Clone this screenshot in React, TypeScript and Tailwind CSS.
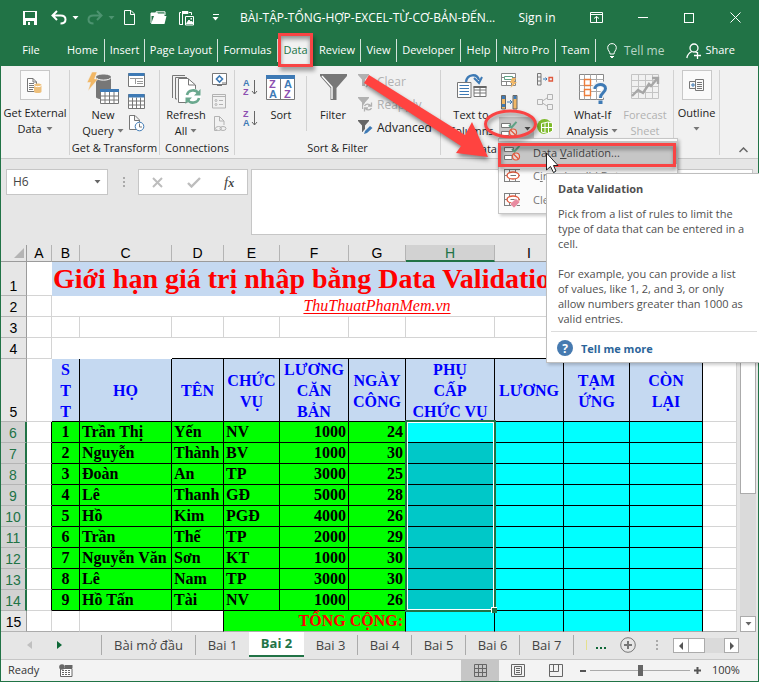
import type { ReactNode } from 'react'

const TABS = [
  { label: 'Home',        cls: 'w-[44px] border-r' },
  { label: 'Insert',      cls: 'w-[40px] border-r' },
  { label: 'Page Layout', cls: 'w-[73px] border-r' },
  { label: 'Formulas',    cls: 'w-[60px] border-r' },
  { label: 'Data',        cls: 'w-[36px]' },
  { label: 'Review',      cls: 'w-[47px] border-r' },
  { label: 'View',        cls: 'w-[36px] border-r' },
  { label: 'Developer',   cls: 'w-[64px] border-r' },
  { label: 'Help',        cls: 'w-[36px] border-r' },
  { label: 'Nitro Pro',   cls: 'w-[59px] border-r' },
  { label: 'Team',        cls: 'w-[40px] border-r' },
]

const COLUMNS = [
  { name: 'A', w: 'w-[25px]' },
  { name: 'B', w: 'w-[28px]' },
  { name: 'C', w: 'w-[92px]' },
  { name: 'D', w: 'w-[52px]' },
  { name: 'E', w: 'w-[56px]' },
  { name: 'F', w: 'w-[69px]' },
  { name: 'G', w: 'w-[57px]' },
  { name: 'H', w: 'w-[89px]' },
  { name: 'I', w: 'w-[69px]' },
  { name: 'J', w: 'w-[66px]' },
  { name: 'K', w: 'w-[73px]' },
  { name: 'L', w: '' },
]

const HEADINGS = [
  ['S', 'T', 'T'],
  ['HỌ'],
  ['TÊN'],
  ['CHỨC', 'VỤ'],
  ['LƯƠNG', 'CĂN', 'BẢN'],
  ['NGÀY', 'CÔNG'],
  ['PHỤ', 'CẤP', 'CHỨC VỤ'],
  ['LƯƠNG'],
  ['TẠM', 'ỨNG'],
  ['CÒN', 'LẠI'],
]

const STAFF = [
  ['Trần Thị',   'Yến',   'NV',  1000, 24],
  ['Nguyễn',     'Thành', 'BV',  1000, 30],
  ['Đoàn',       'An',    'TP',  3000, 25],
  ['Lê',         'Thanh', 'GĐ',  5000, 28],
  ['Hồ',         'Kim',   'PGĐ', 4000, 26],
  ['Trần',       'Thế',   'TP',  2000, 29],
  ['Nguyễn Văn', 'Sơn',   'KT',  1000, 30],
  ['Lê',         'Nam',   'TP',  3000, 30],
  ['Hồ Tấn',     'Tài',   'NV',  1000, 26],
]

const SHEETS = ['Bài mở đầu', 'Bai 1', 'Bai 2', 'Bai 3', 'Bai 4', 'Bai 5', 'Bai 6', 'Bai 7']

function Caret({ className = '' }: { className?: string }) {
  return (
    <svg width="7" height="4" viewBox="0 0 7 4" className={`inline-block shrink-0 ${className}`}>
      <path d="M0.5 0H6.5L3.5 3.5Z" fill="currentColor" />
    </svg>
  )
}

function TitleBar() {
  return (
    <div className="flex h-[35px] items-center text-white">
      <div className="flex w-[239px] shrink-0 items-center pl-[22px]">
        <button aria-label="Save">
          <svg width="15" height="15" viewBox="0 0 15 15">
            <path d="M0 1H14V15H0Z" fill="#fff" />
            <path d="M2 2H12V8H2Z" fill="#217346" />
            <path d="M3 11H11V15H3Z" fill="#217346" />
            <path d="M5 12H7V15H5Z" fill="#fff" />
          </svg>
        </button>
        <button aria-label="Undo" className="ml-[13px] flex items-center gap-[5px]">
          <svg width="16" height="15" viewBox="0 0 16 15" fill="none" stroke="#fff" strokeWidth="2">
            <path d="M6 1L1.5 5.5L6 10M2 5.5H9.5C13 5.5 14.5 7.5 14.5 9.5C14.5 12 12.5 13.5 9.5 13.5" />
          </svg>
          <Caret />
        </button>
        <button aria-label="Redo" className="ml-[8px] flex items-center gap-[5px] text-[#4d9370]">
          <svg width="16" height="15" viewBox="0 0 16 15" fill="none" stroke="currentColor" strokeWidth="2">
            <path d="M10 1L14.5 5.5L10 10M14 5.5H6.5C3 5.5 1.5 7.5 1.5 9.5C1.5 12 3.5 13.5 6.5 13.5" />
          </svg>
          <Caret />
        </button>
        <button aria-label="New" className="ml-[9px]">
          <svg width="13" height="15" viewBox="0 0 13 15" fill="none" stroke="#fff">
            <path d="M0.500 0.500H7L10.500 4V14.500H0.500ZM6.500 0.500V4.500H10.500" />
          </svg>
        </button>
        <button aria-label="Open" className="ml-[13px]">
          <svg width="17" height="14" viewBox="0 0 17 14">
            <path d="M1 12V2H6V0.800H15V4" fill="none" stroke="#fff" />
            <path d="M1 13L4 5H16.500L14.500 13Z" fill="#fff" />
            <path d="M7 1L8 2.500H14.500V5H1V2H6Z" fill="#fff" />
          </svg>
        </button>
        <button aria-label="Paste picture" className="ml-[11px]">
          <svg width="17" height="16" viewBox="0 0 17 16" fill="none" stroke="#fff">
            <path d="M5 14.500H1.500V2.500H3M11 2.500H13.500V5M4.500 1V14" />
            <path d="M5 1.500H10V3.500H5Z" fill="#fff" />
            <path d="M7.500 6.500H15.500V15H7.500Z" />
            <path d="M8.500 13.500L11 10L12.500 12L13.500 11L15 13.500Z" fill="#fff" />
            <path d="M12.500 8H14V9.500H12.500Z" fill="#fff" stroke="none" />
          </svg>
        </button>
        <button aria-label="Customize toolbar" className="ml-[17px] flex flex-col items-center gap-[2px]">
          <span className="h-px w-[6px] bg-white" />
          <Caret />
        </button>
      </div>
      <div className="min-w-0 flex-1 whitespace-nowrap text-[12px]">BÀI-TẬP-TỔNG-HỢP-EXCEL-TỪ-CƠ-BẢN-ĐẾN...</div>
      <div className="flex shrink-0 items-center">
        <button className="w-[42px] whitespace-nowrap text-[12px]">Sign in</button>
        <button aria-label="Ribbon display options" className="ml-[32px]">
          <svg width="13" height="11" viewBox="0 0 13 11" fill="none" stroke="#fff">
            <path d="M0.500 0.500H12.500V10.500H0.500ZM0.500 2.500H12.500M6.500 10V4.500M4 6.500L6.500 4.500L9 6.500" />
          </svg>
        </button>
        <button aria-label="Minimize" className="ml-[35px] flex h-[20px] items-center"><span className="block h-px w-[10px] bg-white" /></button>
        <button aria-label="Maximize" className="ml-[36px] size-[10px] border border-white" />
        <button aria-label="Close" className="mr-[17px] ml-[36px]">
          <svg width="11" height="11" viewBox="0 0 11 11" stroke="#fff"><path d="M0.500 0.500L10.500 10.500M10.500 0.500L0.500 10.500" /></svg>
        </button>
      </div>
    </div>
  )
}

function RibbonTabs() {
  return (
    <nav className="flex h-[31px] items-center text-[11px] text-white">
      <button className="w-[60px]">File</button>
      {TABS.map(({ label, cls }) => (
        <button key={label} className={`relative h-[23px] shrink-0 border-white/80 whitespace-nowrap ${cls}`}>
          {label === 'Data' ? (
            <span className="absolute -top-[6px] left-0 z-20 flex h-[34px] w-[35px] items-center justify-center border-[3px] border-[#f94444] bg-[#f1f1f1] text-[#217346] shadow-[2px_4px_4px_#0005,inset_0_3px_4px_#0006]">
              Data
            </span>
          ) : label}
        </button>
      ))}
      <button className="ml-[11px] flex items-center gap-[7px] text-[12px] text-[#b8d6c6]">
        <svg width="10" height="15" viewBox="0 0 10 15" fill="none" stroke="#fff">
          <path d="M3 11C3 8.500 0.700 7.500 0.700 4.700C0.700 2.200 2.600 0.600 5 0.600C7.400 0.600 9.300 2.200 9.300 4.700C9.300 7.500 7 8.500 7 11ZM3 13.500H7M4 14.500H6" />
        </svg>
        Tell me
      </button>
      <button className="mr-[23px] ml-auto flex items-center gap-[3px]">
        <svg width="16" height="16" viewBox="0 0 16 16" fill="none" stroke="#fff" strokeWidth="1.300">
          <circle cx="8" cy="5" r="4" />
          <path d="M0.800 15C1.500 11.500 3.500 9.500 6 8.500M9.500 8.500L10.500 10M11.500 9V16M8 12.500H15" />
        </svg>
        Share
      </button>
    </nav>
  )
}

function Group({ label, className, children }: { label?: string; className: string; children: ReactNode }) {
  return (
    <div className={`relative mt-1 flex h-[85px] shrink-0 flex-col border-r border-[#d2d2d2] ${className}`}>
      <div className="flex h-[72px]">{children}</div>
      {label && <div className="text-center leading-[15px] whitespace-nowrap">{label}</div>}
    </div>
  )
}

function SheetIcon() {
  return (
    <svg width="17" height="17" viewBox="0 0 17 17">
      <path d="M0.500 1.500H16.500V15.500H0.500Z" fill="#fff" stroke="#777" />
      <path d="M0.500 1H16.500V4.500H0.500Z" fill="#3e7ab5" />
      <path d="M0.500 8H16.500M0.500 12H16.500M4.500 4.500V15.500M8.500 4.500V15.500M12.500 4.500V15.500" stroke="#777" />
    </svg>
  )
}

function ValidationIcon() {
  return (
    <svg width="17" height="16" viewBox="0 0 17 16" fill="none">
      <path d="M0.500 2.500H9.500V6.500H0.500ZM0.500 10.500H8V14.500H0.500Z" fill="#fff" stroke="#777" />
      <path d="M8 4L10.500 6.500L15.500 0.800" stroke="#5fa285" strokeWidth="2" />
      <circle cx="12" cy="11.500" r="3.500" stroke="#e0583c" strokeWidth="1.200" fill="#e8d8d4" />
      <path d="M9.500 9L14.500 14" stroke="#e0583c" strokeWidth="1.200" />
    </svg>
  )
}

function CircleIcon({ clear }: { clear?: boolean }) {
  return (
    <svg width="17" height="16" viewBox="0 0 17 16" fill="none">
      <path d="M0.500 1.500H16M0.500 13.500H16M0.500 1V14M5.500 1V14M11.500 1V4M11.500 11V14M0 7.500H16" stroke="#808080" />
      <ellipse cx="9" cy="7.500" rx="6" ry="3.500" stroke="#e0583c" strokeWidth="1.300" fill="#fff" />
      <path d="M6.500 7.500H12" stroke="#777" />
      {clear && <path d="M6 12L12 6.500L16 10L10 16Z" fill="#e88ba0" stroke="#fff" strokeWidth="0.500" />}
    </svg>
  )
}

function SortArrow({ desc }: { desc?: boolean }) {
  return (
    <svg width="15" height="17" viewBox="0 0 15 17" fontFamily="Liberation Sans" fontSize="9" fontWeight="700">
      <text x="0" y="7" fill={desc ? '#8c4fb0' : '#3e7ab5'}>{desc ? 'Z' : 'A'}</text>
      <text x="0" y="16" fill={desc ? '#3e7ab5' : '#8c4fb0'}>{desc ? 'A' : 'Z'}</text>
      <path d="M11.500 1V15M9 12L11.500 15L14 12" stroke="#666" fill="none" />
    </svg>
  )
}

function Funnel() {
  return <path d="M0 0H11V1L7 5.500V12H4V5.500L0 1Z" fill="currentColor" />
}

function Ribbon() {
  return (
    <div className="flex h-[93px] border-b border-[#c8c8c8] bg-[#f1f1f1] text-[11px] leading-[16px] text-[#222]">
      <Group className="w-[69px]">
        <button className="flex w-full flex-col items-center whitespace-nowrap">
          <span className="mb-[5px] flex size-[30px] items-center justify-center border border-[#c8c8c8] bg-[#fafafa]">
            <svg width="16" height="17" viewBox="0 0 16 17">
              <path d="M0.500 1.500H6L9.500 5V14.500H0.500Z" fill="#fff" stroke="#777" />
              <path d="M2 6.500H7M2 8.500H7M2 10.500H7M2 12.500H6M6 1.500V5H9.500" stroke="#777" fill="none" />
              <path d="M7 8C7 6 14.500 6 14.500 8V14.500C14.500 16.500 7 16.500 7 14.500Z" fill="#eec07c" />
              <path d="M7 8.500C8 10 13.500 10 14.500 8.500" stroke="#fff" fill="none" />
            </svg>
          </span>
          Get External
          <span className="flex items-center gap-[4px]">Data <Caret className="text-[#777]" /></span>
        </button>
      </Group>
      <Group label="Get & Transform" className="w-[90px]">
        <button className="flex w-[64px] flex-col items-center pt-[2px] pl-[2px]">
          <svg width="34" height="32" viewBox="0 0 34 32" className="mb-[3px]">
            <path d="M10 5C10 1.500 25 1.500 25 5V25C25 28 10 28 10 25Z" fill="#777" />
            <path d="M10 5.500C11 9 24 9 25 5.500" stroke="#fff" fill="none" />
            <path d="M6 0H11L8.500 7H12L2 19L4.500 10.500H1Z" fill="#f1b765" stroke="#f1f1f1" strokeWidth="0.500" />
            <path d="M14.500 17.500H32.500V31.500H14.500Z" fill="#fff" stroke="#777" />
            <path d="M14 17H33V20H14Z" fill="#3e7ab5" />
            <path d="M14.500 24H32.500M14.500 28H32.500M19 20V31.500M23.500 20V31.500M28 20V31.500" stroke="#777" />
          </svg>
          New
          <span className="flex items-center gap-[3px]">Query <Caret className="text-[#777]" /></span>
        </button>
        <div className="-ml-[6px] flex flex-col gap-[5px] pt-[2px]">
          <svg width="17" height="16" viewBox="0 0 17 16">
            <path d="M0.500 1.500H16.500V14.500H0.500Z" fill="#fff" stroke="#777" />
            <path d="M0.500 1H16.500V4H0.500Z" fill="#3e7ab5" />
            <path d="M2 6.500H15M7.500 7V12M9 9.500H15M9 11.500H15" stroke="#999" />
          </svg>
          <SheetIcon />
          <svg width="17" height="17" viewBox="0 0 17 17" fill="#fff" stroke="#777">
            <path d="M1.500 0.500H7L11.500 5V14.500H1.500ZM6.500 0.500V5.500H11" />
            <circle cx="11.500" cy="11.500" r="4.300" stroke="#3e7ab5" />
            <path d="M11.500 8.500V12H14" fill="none" />
          </svg>
        </div>
      </Group>
      <Group label="Connections" className="w-[75px]">
        <button className="flex w-[52px] flex-col items-center pt-[4px]">
          <svg width="30" height="30" viewBox="0 0 30 30" className="mb-[3px]">
            <path d="M1.500 1.500H14M1.500 1.500V24M4.500 25V3.500H16M4.500 25H6" fill="none" stroke="#777" />
            <path d="M7.500 4.500H17L24.500 11V28.500H7.500Z" fill="#fff" stroke="#777" />
            <path d="M17.500 5V11H24" fill="none" stroke="#777" />
            <circle cx="22" cy="22.500" r="8" fill="#fff" />
            <path d="M16 21C17 15.500 25 15 27 19M28 24C27 29.500 19 30 17 26" fill="none" stroke="#6aa88e" strokeWidth="2.600" />
            <path d="M29.500 15V21.500H23ZM14.500 30V23.500H21Z" fill="#6aa88e" />
          </svg>
          Refresh
          <span className="flex items-center gap-[3px]">All <Caret className="text-[#777]" /></span>
        </button>
        <div className="flex flex-col gap-[7px] pt-[2px]">
          <svg width="16" height="14" viewBox="0 0 16 14">
            <path d="M0.500 1.500H14.500V12.500H0.500Z" fill="#fff" stroke="#777" />
            <path d="M7.500 4L10.500 7L7.500 10L4.500 7Z" fill="none" stroke="#3e7ab5" strokeWidth="1.600" />
            <path d="M10 11H15M5 13.500H10" stroke="#777" />
          </svg>
          <svg width="15" height="16" viewBox="0 0 15 16" fill="none" stroke="#b3b3b3">
            <path d="M0.500 1.500H13.500V15H0.500ZM0.500 3.500H13.500M7 7.500H11M7 11.500H11" />
            <circle cx="4" cy="7.500" r="1" /><circle cx="4" cy="11.500" r="1" />
          </svg>
          <svg width="15" height="17" viewBox="0 0 15 17" fill="none" stroke="#b3b3b3">
            <path d="M5 14.500H2.500V0.500H7.500L12 5V9M7.500 0.500V5H12" />
            <ellipse cx="6.500" cy="12.500" rx="3" ry="2" /><ellipse cx="11" cy="12.500" rx="3" ry="2" />
          </svg>
        </div>
      </Group>
      <Group label="Sort & Filter" className="w-[206px]">
        <div className="flex flex-col gap-[14px] pt-[9px] pl-[8px]">
          <button aria-label="Sort A to Z"><SortArrow /></button>
          <button aria-label="Sort Z to A"><SortArrow desc /></button>
        </div>
        <button className="ml-[8px] flex w-[30px] flex-col items-center pt-[4px]">
          <svg width="30" height="27" viewBox="0 0 30 27" className="mb-[6px]" fontFamily="Liberation Sans" fontSize="11" fontWeight="700">
            <path d="M0.500 1.500H28.500V25.500H0.500Z" fill="#fff" stroke="#777" />
            <path d="M0 1H29V5H0Z" fill="#3e7ab5" />
            <path d="M14.500 5V25" stroke="#777" />
            <text x="3" y="14" fill="#8c4fb0">Z</text><text x="3" y="24" fill="#3e7ab5">A</text>
            <text x="18" y="14" fill="#3e7ab5">A</text><text x="18" y="24" fill="#8c4fb0">Z</text>
          </svg>
          Sort
        </button>
        <div className="mt-[6px] ml-[10px] h-[55px] w-px bg-[#d2d2d2]" />
        <button className="ml-[11px] flex w-[30px] flex-col items-center pt-[3px]">
          <svg width="29" height="28" viewBox="0 0 29 28" className="mb-[6px]">
            <path d="M1 1H28V3L17.500 15V27H11.500V15L1 3Z" fill="#777" />
            <path d="M3 3L13 14V26" stroke="#fff" strokeWidth="1.400" fill="none" />
          </svg>
          Filter
        </button>
        <div className="flex flex-col pl-[10px] text-[12px] leading-[23px] whitespace-nowrap">
          <button className="flex items-center gap-[4px] text-[#b1b1b1]">
            <svg width="15" height="15" viewBox="0 0 15 15"><Funnel /><path d="M8 7L13 13M13 7L8 13" stroke="currentColor" strokeWidth="1.500" /></svg>
            Clear
          </button>
          <button className="flex items-center gap-[4px] text-[#b1b1b1]">
            <svg width="15" height="15" viewBox="0 0 15 15">
              <Funnel />
              <circle cx="10" cy="10" r="5" fill="#f1f1f1" />
              <path d="M6.500 9C7.500 6.500 11 6.500 12.500 8.500M13.500 5.500V9H10M13.500 11C12.500 13.500 9 13.500 7.500 11.500M6.500 14.500V11H10" fill="none" stroke="currentColor" strokeWidth="1.300" />
            </svg>
            Reapply
          </button>
          <button className="flex items-center gap-[4px] text-[#222]">
            <svg width="15" height="15" viewBox="0 0 15 15" className="text-[#666]">
              <Funnel /><path d="M6.500 13.500L12.500 6.500" stroke="#f1f1f1" strokeWidth="5" /><path d="M6 14L7 11L12 6L14.500 8L9 13Z" fill="#3e7ab5" />
            </svg>
            Advanced
          </button>
        </div>
      </Group>
      <DataTools />
      <Group className="w-[114px]">
        <button className="flex w-[65px] flex-col items-center pt-[3px] whitespace-nowrap">
          <svg width="30" height="32" viewBox="0 0 30 32" className="mb-[2px]">
            <path d="M1.500 1.500H25.500V26.500H1.500Z" fill="#fff" stroke="#888" />
            <path d="M1.500 6.500H25.500M1.500 12.500H25.500M1.500 18.500H25.500M6.500 1.500V26.500M12.500 1.500V26.500M18.500 1.500V26.500" stroke="#aaa" />
            <path d="M6.500 6.500H12.500V12.500H6.500ZM6.500 16.500H12.500V22.500H6.500Z" fill="#fff" stroke="#ed7d3a" strokeWidth="1.400" />
            <path d="M17 16C17 9.500 28 9.500 28 15.500C28 20 22.500 19.500 22.500 25" fill="none" stroke="#f1f1f1" strokeWidth="6" />
            <path d="M17 16C17 10 27.500 10 27.500 15.500C27.500 20 22.500 19.500 22.500 25" fill="none" stroke="#3e7ab5" strokeWidth="3" />
            <path d="M20.500 27.500H24.500V31H20.500Z" fill="#3e7ab5" />
          </svg>
          What-If
          <span className="flex items-center gap-[3px]">Analysis <Caret className="text-[#777]" /></span>
        </button>
        <button className="flex w-[40px] flex-col items-center pt-[3px] text-[#b1b1b1]">
          <svg width="30" height="28" viewBox="0 0 30 28" className="mb-[6px]" fill="none" stroke="#c4c4c4">
            <path d="M1.500 1.500H28.500V25.500H1.500ZM1.500 7.500H28.500M1.500 13.500H28.500M1.500 19.500H28.500M8.500 1.500V25.500M15.500 1.500V25.500M22.500 1.500V25.500" />
            <path d="M2 23L8 17L13 20L19 11L21 13L27 6M22 5H28V11" stroke="#a6a6a6" strokeWidth="2.400" />
          </svg>
          Forecast
          <span>Sheet</span>
        </button>
      </Group>
      <Group className="w-[46px]">
        <button className="flex w-full flex-col items-center">
          <span className="mb-[5px] flex size-[30px] items-center justify-center border border-[#c8c8c8] bg-[#fafafa]">
            <svg width="16" height="14" viewBox="0 0 16 14" fill="none" stroke="#777">
              <path d="M6.500 1.500H14.500V12.500H6.500ZM8 4.500H13M8 6.500H13M8 8.500H13M8 10.500H13M6 3.500H0.500V10.500H6" />
              <path d="M2 7H6M4 5V9" stroke="#3e7ab5" />
            </svg>
          </span>
          Outline
          <Caret className="mt-[6px] text-[#777]" />
        </button>
      </Group>
      <button aria-label="Collapse the ribbon" className="mr-[10px] mb-[5px] ml-auto self-end">
        <svg width="9" height="6" viewBox="0 0 9 6" fill="none" stroke="#666" strokeWidth="1.500"><path d="M0.500 5L4.500 1L8.500 5" /></svg>
      </button>
    </div>
  )
}

function DataTools() {
  return (
    <Group label="Data Tools" className="w-[119px]">
      <button className="flex w-[60px] flex-col items-center pt-[3px]">
        <svg width="31" height="28" viewBox="0 0 31 28" className="mb-[6px]">
          <path d="M10 9C11 1 21 0 23 7" fill="none" stroke="#3e7ab5" strokeWidth="2.400" />
          <path d="M18 5L23 10L26 4" fill="none" stroke="#3e7ab5" strokeWidth="2" />
          <path d="M1.500 9.500H15V24.500H1.500Z" fill="#fff" stroke="#777" />
          <path d="M3.500 12.500H13M3.500 15.500H13M3.500 18.500H13M3.500 21.500H13" stroke="#3e7ab5" />
          <path d="M18 13.500H30V23.500H18ZM18 17H30M18 20H30M24 14V23" fill="#fff" stroke="#777" />
          <path d="M17.500 13H30.500V15H17.500Z" fill="#666" />
        </svg>
        Text to
        <span>Columns</span>
      </button>
      <div className="flex w-[34px] flex-col items-start gap-[7px] pt-[3px]">
        <button aria-label="Flash Fill">
          <svg width="17" height="15" viewBox="0 0 17 15">
            <path d="M0.500 0.500H14.500V12.500H0.500ZM0.500 4.500H14M0.500 8.500H14M5.500 8.500V12M10.500 8.500V12" fill="#fff" stroke="#888" />
            <path d="M3.500 3.500H11.500V6.500H3.500Z" fill="#fff" stroke="#5fa285" />
            <path d="M11 5H15L13 9H16L9.500 15L11.500 10H9Z" fill="#f1b765" />
          </svg>
        </button>
        <button aria-label="Remove Duplicates">
          <svg width="17" height="15" viewBox="0 0 17 15">
            <path d="M0.500 0.500H4.500V14H0.500ZM12 0.500H16V14H12Z" fill="#f1b765" stroke="#666" />
            <path d="M1 1H4V4H1ZM1 9H4V12H1ZM12.500 1H15.500V4H12.500Z" fill="#3e7ab5" />
            <path d="M6 7H11M9 5L11 7L9 9" fill="none" stroke="#3e7ab5" />
          </svg>
        </button>
        <button aria-label="Data Validation" aria-expanded="true" className="-ml-[2px] flex h-[24px] w-[35px] items-center gap-[6px] bg-[#c6c6c6] pl-[2px] text-[#444]">
          <ValidationIcon />
          <Caret />
        </button>
      </div>
      <div className="flex flex-col gap-[8px] pt-[2px] pl-[2px]">
        <button aria-label="Consolidate">
          <svg width="17" height="14" viewBox="0 0 17 14" fill="none" stroke="#777">
            <path d="M0.500 1.500H4V13H0.500ZM0.500 5H4M0.500 9H4" />
            <path d="M6 7H10M8.500 5.500L10 7L8.500 8.500" stroke="#3e7ab5" />
            <path d="M12 5.500H15.500V9H12Z" stroke="#e0583c" strokeWidth="1.300" />
          </svg>
        </button>
        <button aria-label="Relationships">
          <svg width="17" height="16" viewBox="0 0 17 16" fill="none" stroke="#b3b3b3">
            <path d="M0.500 5.500H5.500V10.500H0.500ZM10.500 0.500H15.500V5.500H10.500ZM10.500 10.500H15.500V15.500H10.500ZM5.500 7L10 4M5.500 9L10 12" />
          </svg>
        </button>
        <button aria-label="Manage Data Model">
          <svg width="17" height="17" viewBox="0 0 17 17">
            <circle cx="7.500" cy="8.500" r="7.500" fill="#7fbb2c" />
            <path d="M4.500 5.500L11 4L15.500 5V13L11 15.500L4.500 14Z" fill="#7fbb2c" stroke="#fff" />
            <path d="M5 9.500H15.500M8 5V14.500M11.500 4V15" stroke="#fff" />
          </svg>
        </button>
      </div>

      <div className="absolute top-[68px] left-[57px] z-20 h-[76px] w-[180px] border border-[#c6c6c6] bg-[#fbfbfb] pt-[2px] text-[#444] shadow-[2px_2px_3px_#0003]">
        <button className="flex h-[23px] w-full items-center gap-[12px] bg-[#c6c6c6] pl-[5px]"><ValidationIcon /><span>Data <u>V</u>alidation...</span></button>
        <button className="flex h-[24px] w-full items-center gap-[12px] pl-[5px] whitespace-nowrap text-[#777]"><CircleIcon /><span>C<u>i</u>rcle Invalid Data</span></button>
        <button className="flex h-[24px] w-full items-center gap-[12px] pl-[5px] whitespace-nowrap text-[#777]"><CircleIcon clear /><span>Clea<u>r</u> Validation Circles</span></button>
      </div>
      <Annotations />
      <Tooltip />
    </Group>
  )
}

// Red call-outs drawn over the ribbon plus the mouse pointer
function Annotations() {
  return (
    <svg width="330" height="120" viewBox="360 66 330 120" className="pointer-events-none absolute -top-[4px] -left-[81px] z-40 max-w-none">
      <g filter="drop-shadow(1px 3px 2px rgba(0,0,0,0.450))">
        <path d="M369 75L465 135L472 122L488 157L456 153L461 146L364 83Z" fill="#ff4340" />
        <ellipse cx="510.500" cy="124" rx="25" ry="13" fill="none" stroke="#f94444" strokeWidth="3" />
        <path d="M499.500 144.500H674.500V165.500H499.500Z" fill="none" stroke="#f94444" strokeWidth="3" />
      </g>
      <path d="M546.500 153V170L550.500 166.500L553.500 172.500L556 171L553.500 165.500H558Z" fill="#fff" stroke="#222" />
    </svg>
  )
}

function Tooltip() {
  return (
    <div role="tooltip" className="absolute top-[103px] left-[105px] z-30 h-[190px] w-[213px] border border-r-0 border-[#bebebe] bg-white pt-[7px] pl-[11px] text-[11px] leading-[15px] whitespace-nowrap text-[#505050] shadow-[2px_2px_3px_#0003]">
      <p className="font-bold">Data Validation</p>
      <p className="mt-[10px]">Pick from a list of rules to limit the<br />type of data that can be entered in a<br />cell.</p>
      <p className="mt-[15px]">For example, you can provide a list<br />of values, like 1, 2, and 3, or only<br />allow numbers greater than 1000 as<br />valid entries.</p>
      <hr className="mt-[5px] mr-[2px] -ml-[7px] border-[#dcdcdc]" />
      <a href="#help" className="mt-[8px] flex items-center gap-[8px] font-bold text-[#2b6499]">
        <span className="-ml-px flex size-[16px] items-center justify-center rounded-full bg-[#467ab0] text-[12px] text-white">?</span>
        Tell me more
      </a>
    </div>
  )
}

function FormulaBar() {
  return (
    <div className="flex h-[86px] items-start bg-[#e6e6e6] pt-[10px] pr-[5px] pl-[5px]">
      <div className="flex h-[26px] w-[102px] shrink-0 items-center border border-[#c6c6c6] bg-white pr-[6px] text-[#666]">
        <input aria-label="Name box" defaultValue="H6" className="w-full min-w-0 pl-[6px] text-[12px] text-[#444] outline-none" />
        <button aria-label="Choose name"><Caret className="mb-[3px]" /></button>
      </div>
      <div className="mt-[8px] ml-[14px] flex w-[4px] flex-col items-center gap-[2px]">
        <i className="size-[2px] bg-[#aaa]" /><i className="size-[2px] bg-[#aaa]" /><i className="size-[2px] bg-[#aaa]" />
      </div>
      <div className="ml-[12px] flex h-[26px] w-[110px] shrink-0 items-center border border-[#c6c6c6] bg-white pl-[13px]">
        <button aria-label="Cancel"><svg width="11" height="11" viewBox="0 0 11 11" stroke="#bdbdbd" strokeWidth="2"><path d="M1 1L10 10M10 1L1 10" /></svg></button>
        <button aria-label="Enter" className="ml-[24px]"><svg width="14" height="11" viewBox="0 0 14 11" fill="none" stroke="#bdbdbd" strokeWidth="2.400"><path d="M1 6L4.500 9.500L13 1" /></svg></button>
        <button aria-label="Insert function" className="ml-[23px] font-['Liberation_Serif',serif] text-[15px] leading-[16px] text-[#444] italic">f<span className="text-[12px] font-bold">x</span></button>
      </div>
      <textarea aria-label="Formula" className="ml-[3px] block h-[66px] min-w-0 flex-1 resize-none border border-[#c6c6c6] bg-white outline-none" />
    </div>
  )
}

function RowHead({ n, selected }: { n: number; selected?: boolean }) {
  return (
    <th className={`border-b p-0 align-bottom font-['Liberation_Sans',sans-serif] text-[14px] leading-[18px] font-normal ${selected
      ? 'border-r-2 border-r-[#217346] border-b-[#b4b4b4] bg-[#d2d2d2] text-[#217346]'
      : 'border-r border-r-[#9b9b9b] border-b-[#b4b4b4] bg-[#e6e6e6] text-black'}`}>
      {n}
    </th>
  )
}

const GRID = 'border-r border-b border-[#d4d4d4] p-0'
const INK = 'border-r border-b border-black p-0'

function Sheet() {
  return (
    <div className="flex bg-[#e6e6e6]">
      <div className="relative min-w-0 flex-1">
        <table className="w-full table-fixed border-separate border-spacing-0 bg-white font-['Liberation_Serif',serif] text-[16px] leading-[20px]">
          <colgroup>
            <col className="w-[26px]" />
            {COLUMNS.map(c => <col key={c.name} className={c.w} />)}
          </colgroup>
          <thead>
            <tr className="h-[17px] bg-[#e6e6e6] font-['Liberation_Sans',sans-serif] text-[14px] leading-[15px]">
              <td className="border-r border-b border-[#9b9b9b] p-0">
                <svg width="10" height="10" viewBox="0 0 10 10" className="mr-[2px] ml-auto"><path d="M10 0V10H0Z" fill="#b4b4b4" /></svg>
              </td>
              {COLUMNS.map(({ name }) => (
                <th key={name} className={`border-r p-0 font-normal ${name === 'H'
                  ? 'border-b-2 border-r-[#b4b4b4] border-b-[#217346] bg-[#d2d2d2] leading-[14px] text-[#217346]'
                  : 'border-b border-r-[#b4b4b4] border-b-[#9b9b9b] text-black'}`}>
                  {name}
                </th>
              ))}
            </tr>
          </thead>
          <tbody>
            <tr className="h-[34px]">
              <RowHead n={1} />
              <td className="border-b border-[#d4d4d4] p-0" />
              <td colSpan={10} className="bg-[#c5d9f1] p-0 pl-px text-[28px] leading-[34px] font-bold whitespace-nowrap text-[#f00]">
                Giới hạn giá trị nhập bằng Data Validation
              </td>
              <td className={GRID} />
            </tr>
            <tr className="h-[21px]">
              <RowHead n={2} />
              <td className={GRID} />
              <td colSpan={10} className={`${GRID} text-center`}>
                <a href="#site" className="text-[#f00] italic underline underline-offset-2">ThuThuatPhanMem.vn</a>
              </td>
              <td className={GRID} />
            </tr>
            <tr className="h-[21px]">
              <RowHead n={3} />
              {COLUMNS.map(c => <td key={c.name} className={GRID} />)}
            </tr>
            <tr className="h-[21px]">
              <RowHead n={4} />
              <td className={GRID} />
              <td colSpan={2} className="p-0" />
              <td colSpan={8} className="border-b border-black p-0" />
              <td className={GRID} />
            </tr>
            <tr className="h-[63px]">
              <RowHead n={5} />
              <td className="border-b border-[#d4d4d4] p-0" />
              {HEADINGS.map((lines, i) => (
                <th key={i} className={`${INK} bg-[#c5d9f1] leading-[21px] whitespace-nowrap text-[#00f]`}>
                  <div className="-mb-px">
                    {lines.map((line, j) => <div key={j}>{line}</div>)}
                  </div>
                </th>
              ))}
              <td className={GRID} />
            </tr>
            {STAFF.map(([family, given, role, pay, days], i) => (
              <tr key={i} className="h-[21px] bg-[#0f0] font-bold whitespace-nowrap">
                <RowHead n={i + 6} selected />
                <td className="border-r border-b border-r-black border-b-[#d4d4d4] bg-white p-0" />
                <td className={`${INK} text-center`}>{i + 1}</td>
                <td className={`${INK} pl-[2px]`}>{family}</td>
                <td className={`${INK} pl-[2px]`}>{given}</td>
                <td className={`${INK} pl-[2px]`}>{role}</td>
                <td className={`${INK} pr-[2px] text-right`}>{pay}</td>
                <td className={`${INK} pr-[2px] text-right`}>{days}</td>
                <td className={`${INK} ${i === 0 ? 'bg-[#0ff]' : 'bg-[#00c8c8]'}`} />
                <td className={`${INK} bg-[#0ff]`} />
                <td className={`${INK} bg-[#0ff]`} />
                <td className={`${INK} bg-[#0ff]`} />
                <td className={`${GRID} bg-white`} />
              </tr>
            ))}
            <tr className="h-[21px]">
              <RowHead n={15} />
              <td className="border-r border-b border-r-[#d4d4d4] border-b-[#ababab] p-0" />
              <td className="border-r border-b border-r-[#d4d4d4] border-b-[#ababab] p-0" />
              <td className="border-r border-b border-r-[#d4d4d4] border-b-[#ababab] p-0" />
              <td className="border-r border-b border-r-black border-b-[#ababab] p-0" />
              <td colSpan={3} className="border-r border-b border-r-black border-b-[#ababab] bg-[#0f0] p-0 pr-[2px] text-right font-bold text-[#f00]">TỔNG CỘNG:</td>
              {['H', 'I', 'J', 'K'].map(c => <td key={c} className="border-r border-b border-r-black border-b-[#ababab] bg-[#0ff] p-0" />)}
              <td className="border-r border-b border-r-[#d4d4d4] border-b-[#ababab] p-0" />
            </tr>
          </tbody>
        </table>
        {/* active selection H6:H14 */}
        <div className="absolute top-[175px] left-[404px] h-[192px] w-[91px] border-2 border-[#217346]">
          <div className="h-full border border-white" />
          <span className="absolute -right-[3px] -bottom-[3px] size-[6px] border-t border-l border-white bg-[#217346]" />
        </div>
      </div>
      <div className="mt-[17px] mr-[2px] ml-[3px] flex w-[16px] shrink-0 flex-col bg-[#dadada]">
        <div className="h-[232px] border border-[#ababab] bg-white" />
        <button aria-label="Scroll down" className="mt-auto flex h-[16px] items-center justify-center border border-[#ababab] bg-white text-[#666]"><Caret /></button>
      </div>
    </div>
  )
}

function SheetTabs() {
  return (
    <div className="flex h-[27px] items-start bg-[#e6e6e6] text-[13px] text-[#444]">
      <button aria-label="Previous sheets" className="mt-[9px] ml-[26px]"><svg width="5" height="8" viewBox="0 0 5 8"><path d="M5 0V8L0 4Z" fill="#c0c0c0" /></svg></button>
      <button aria-label="Next sheets" className="mt-[9px] ml-[25px]"><svg width="5" height="8" viewBox="0 0 5 8"><path d="M0 0V8L5 4Z" fill="#0e6837" /></svg></button>
      <div className="mt-[3px] ml-[39px] h-[20px] w-px bg-[#ababab]" />
      {SHEETS.map(name => name === 'Bai 2' ? (
        <button key={name} className="h-[25px] w-[55px] shrink-0 border-b-2 border-[#217346] bg-white font-bold text-[#217346]">{name}</button>
      ) : (
        <button key={name} className={`mt-[3px] h-[20px] shrink-0 leading-[19px] whitespace-nowrap ${name === 'Bài mở đầu' ? 'w-[94px] border-r border-[#ababab]' : name === 'Bai 1' ? 'w-[53px]' : 'w-[54px] border-r border-[#ababab]'}`}>{name}</button>
      ))}
      <span className="mt-[8px] ml-[12px] h-[10px] w-px bg-[#e5e08e]" />
      <button className="ml-[8px]" aria-label="More sheets">
        <svg width="12" height="22" viewBox="0 0 12 22" fill="#0e6837"><path d="M1 15H3V17H1ZM5 15H7V17H5ZM9 15H11V17H9Z" /></svg>
      </button>
      <button aria-label="New sheet" className="mt-[5px] ml-[13px]">
        <svg width="16" height="16" viewBox="0 0 16 16" fill="none" stroke="#777"><circle cx="8" cy="8" r="7.300" /><path d="M8 4V12M4 8H12" strokeWidth="2" /></svg>
      </button>
      <div className="mt-[8px] ml-auto flex w-[3px] flex-col gap-[2px]">
        <i className="size-[2px] bg-[#aaa]" /><i className="size-[2px] bg-[#aaa]" /><i className="size-[2px] bg-[#aaa]" />
      </div>
      <div className="mt-[6px] mr-[19px] ml-[14px] flex h-[15px] w-[66px] bg-[#dadada]">
        <button aria-label="Scroll left" className="flex w-[16px] items-center justify-center border border-[#ababab] bg-white"><svg width="4" height="8" viewBox="0 0 4 8"><path d="M4 0V8L0 4Z" fill="#555" /></svg></button>
        <div className="w-[16px] border border-l-0 border-[#ababab] bg-white" />
        <button aria-label="Scroll right" className="ml-auto flex w-[15px] items-center justify-center border border-[#ababab] bg-white"><svg width="4" height="8" viewBox="0 0 4 8"><path d="M0 0V8L4 4Z" fill="#555" /></svg></button>
      </div>
    </div>
  )
}

function StatusBar() {
  return (
    <div className="flex h-[22px] items-center border-t border-[#c6c6c6] bg-[#f3f3f3] text-[11px] text-[#333]">
      <span className="w-[58px] pl-[7px]">Ready</span>
      <button aria-label="Record macro">
        <svg width="14" height="13" viewBox="0 0 14 13">
          <path d="M1.500 4.500H13V12.500H1.500Z" fill="#fff" stroke="#666" />
          <path d="M6 1H13.500V4H6Z" fill="#666" />
          <path d="M3 6.500H11.500M3 8.500H11.500M3 10.500H11.500" stroke="#666" strokeDasharray="2 1" />
          <circle cx="3" cy="3" r="2.800" fill="#666" />
        </svg>
      </button>
      <div className="ml-auto flex h-full items-center">
        <button aria-label="Normal view" className="flex h-full w-[38px] items-center justify-center bg-[#c6c6c6]">
          <svg width="13" height="13" viewBox="0 0 13 13" fill="none" stroke="#666"><path d="M0.500 0.500H12.500V12.500H0.500ZM0.500 4.500H12.500M0.500 8.500H12.500M4.500 0.500V12.500M8.500 0.500V12.500" /></svg>
        </button>
        <button aria-label="Page layout view" className="flex w-[38px] justify-center">
          <svg width="14" height="13" viewBox="0 0 14 13" fill="none" stroke="#666"><path d="M0.500 0.500H13.500V12.500H0.500ZM3.500 2.500H10.500V10.500H3.500ZM5 4.500H9M5 6.500H9M5 8.500H9" /></svg>
        </button>
        <button aria-label="Page break view" className="flex w-[38px] justify-center">
          <svg width="14" height="13" viewBox="0 0 14 13" fill="none" stroke="#666"><path d="M0.500 0.500H13.500V12.500H0.500ZM4.500 0.500V7.500H9.500V0.500M0.500 7.500H5" /></svg>
        </button>
        <button aria-label="Zoom out" className="ml-[5px] h-[2px] w-[6px] bg-[#555]" />
        <input type="range" aria-label="Zoom" defaultValue="50" className="mx-[4px] h-[11px] w-[100px] appearance-none bg-[linear-gradient(#aaa,#aaa)] bg-[length:100%_1px] bg-center bg-no-repeat [&::-webkit-slider-thumb]:h-[11px] [&::-webkit-slider-thumb]:w-[5px] [&::-webkit-slider-thumb]:appearance-none [&::-webkit-slider-thumb]:bg-[#666]" />
        <button aria-label="Zoom in"><svg width="7" height="7" viewBox="0 0 7 7" stroke="#555" strokeWidth="2"><path d="M3.500 0V7M0 3.500H7" /></svg></button>
        <span className="mr-[18px] ml-[11px] w-[28px] whitespace-nowrap">100%</span>
      </div>
    </div>
  )
}

export default function App() {
  return (
    <div className="border-x border-b border-[#217346] bg-[#217346] font-['Open_Sans','Segoe_UI',sans-serif]">
      <TitleBar />
      <RibbonTabs />
      <Ribbon />
      <FormulaBar />
      <Sheet />
      <SheetTabs />
      <StatusBar />
    </div>
  )
}
